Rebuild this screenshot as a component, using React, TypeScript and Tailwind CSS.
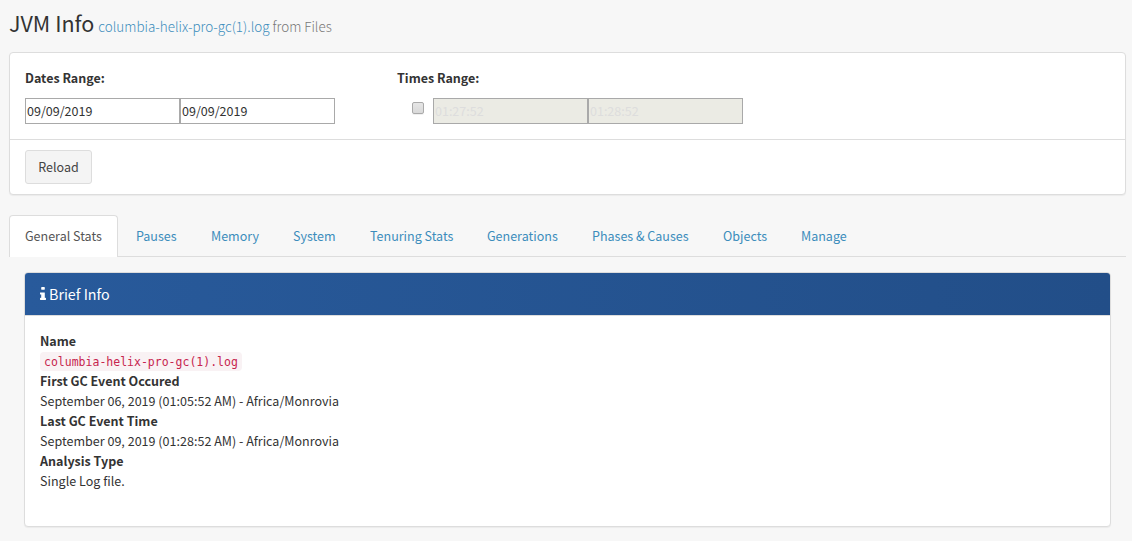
const tabs = [
  { label: "Pauses", width: "w-[75px]" },
  { label: "Memory", width: "w-[82px]" },
  { label: "System", width: "w-[77px]" },
  { label: "Tenuring Stats", width: "w-[117px]" },
  { label: "Generations", width: "w-[105px]" },
  { label: "Phases & Causes", width: "w-[131px]" },
  { label: "Objects", width: "w-[78px]" },
  { label: "Manage", width: "w-[78px]" },
];

const details = [
  { title: "First GC Event Occured", text: "September 06, 2019 (01:05:52 AM) - Africa/Monrovia" },
  { title: "Last GC Event Time", text: "September 09, 2019 (01:28:52 AM) - Africa/Monrovia" },
  { title: "Analysis Type", text: "Single Log file." },
];

function InfoIcon() {
  return (
    <svg viewBox="0 0 640 1536" className="mr-[3px] mb-[2px] h-[13px] w-[6px]" preserveAspectRatio="none" fill="currentColor" aria-hidden="true">
      <path d="M640 1344v128q0 26-19 45t-45 19h-512q-26 0-45-19t-19-45v-128q0-26 19-45t45-19h64v-384h-64q-26 0-45-19t-19-45v-128q0-26 19-45t45-19h384q26 0 45 19t19 45v576h64q26 0 45 19t19 45zM512 64v192q0 26-19 45t-45 19h-256q-26 0-45-19t-19-45v-192q0-26 19-45t45-19h256q26 0 45 19t19 45z" />
    </svg>
  );
}

function Field({ value, disabled = false }: { value: string; disabled?: boolean }) {
  return (
    <div
      className={
        disabled
          ? "h-[26px] w-[155px] border border-[#a9a9a9] bg-[#ebebe4] pl-px leading-6 text-[#dddddd]"
          : "h-[26px] w-[155px] border border-[#a9a9a9] bg-white pl-px leading-6 text-[#333]"
      }
    >
      {value}
    </div>
  );
}

export default function App() {
  return (
    <div className="h-[541px] overflow-hidden bg-[#f7f7f7] pr-[6px] pl-[9px] font-['Noto_Sans_CJK_SC','Noto_Sans',sans-serif] text-[12.53px] leading-5 whitespace-nowrap text-[#333]">
      <h1 className="flex h-[52px] items-baseline pt-[9px] text-[21.5px] leading-[28px]">
        JVM Info
        <small className="ml-1 text-[13.45px] font-light text-[#777]">
          <a className="text-[#3c8dbc]">columbia-helix-pro-gc(1).log</a> from Files
        </small>
      </h1>

      <section className="h-[143px] rounded-[4px] border border-[#ddd] bg-white shadow-[0_1px_1px_rgba(0,0,0,0.05)]">
        <div className="flex h-[87px] border-b border-[#ddd] pt-[15px] pl-[15px]">
          <div className="w-[372px]">
            <div className="font-bold">Dates Range:</div>
            <div className="mt-[10px] flex">
              <Field value="09/09/2019" />
              <Field value="09/09/2019" />
            </div>
          </div>
          <div>
            <div className="font-bold">Times Range:</div>
            <div className="mt-[10px] flex">
              <span className="mt-1 mr-[9px] ml-[15px] h-3 w-3 rounded-[2px] border border-[#aaa] bg-linear-to-b from-[#e6e6e6] to-[#d9d9d9] shadow-[0_1px_0_rgba(0,0,0,0.06)]" />
              <Field value="01:27:52" disabled />
              <Field value="01:28:52" disabled />
            </div>
          </div>
        </div>
        <button className="mt-[10px] ml-[15px] h-[34px] w-[67px] rounded-[3px] border border-[#ddd] bg-[#f4f4f4] text-[#444]">
          Reload
        </button>
      </section>

      <nav className="mt-5 flex h-[42px] border-b border-[#ddd]">
        <a className="mr-[2px] h-[42px] w-[109px] rounded-t-[4px] border border-b-0 border-[#ddd] bg-white pt-[10px] pl-[15px] text-[#555]">
          General Stats
        </a>
        {tabs.map((tab) => (
          <a key={tab.label} className={`${tab.width} pt-[11px] pl-4 text-[#3c8dbc]`}>
            {tab.label}
          </a>
        ))}
      </nav>

      <section className="mt-[15px] mr-[15px] ml-[15px] h-[255px] rounded-[4px] border border-[#ddd] bg-white shadow-[0_1px_1px_rgba(0,0,0,0.05)]">
        <h2 className="flex h-[43px] items-center rounded-t-[3px] border-b border-[#ddd] bg-linear-to-r from-[#285a9b] to-[#224e88] pl-[15px] text-[14.3px] text-white">
          <InfoIcon />
          Brief Info
        </h2>
        <div className="px-[15px] pt-[15px]">
          <div className="font-bold">Name</div>
          <div className="flex h-5 items-center">
            <code className="h-[19px] rounded-[4px] bg-[#f9f2f4] px-1 font-['DejaVu_Sans_Mono',monospace] text-[11.5px] leading-[21px] text-[#c7254e]">
              columbia-helix-pro-gc(1).log
            </code>
          </div>
          {details.map((item) => (
            <div key={item.title}>
              <div className="font-bold">{item.title}</div>
              <div className="tracking-[0.015px]">{item.text}</div>
            </div>
          ))}
        </div>
      </section>
    </div>
  );
}
